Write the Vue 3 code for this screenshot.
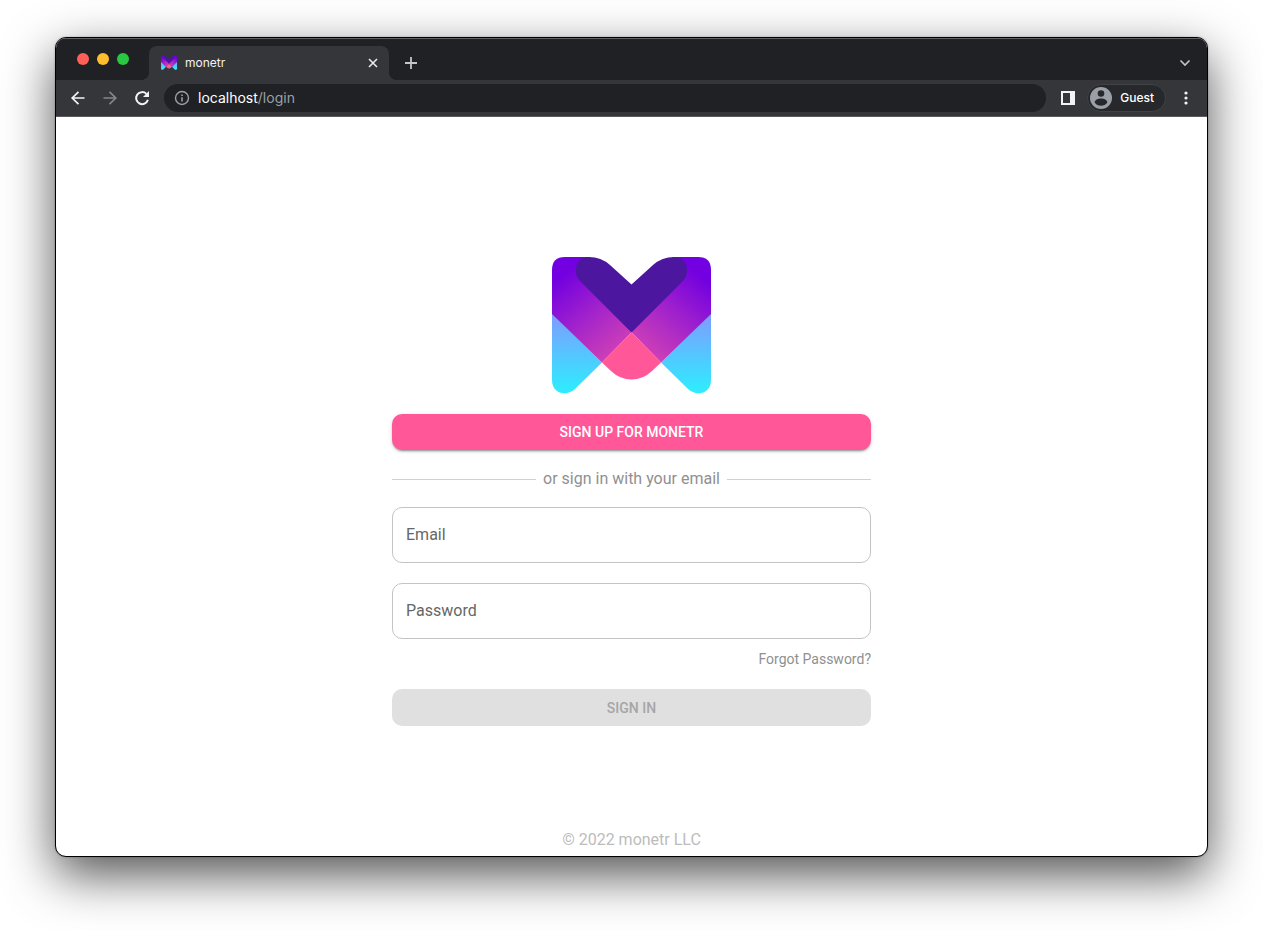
<script setup>
import { ref } from 'vue'

const email = ref('')
const password = ref('')
const address = ref('localhost/login')
</script>

<template>
  <div class="desktop">
    <svg class="defs" width="0" height="0" aria-hidden="true">
      <defs>
        <linearGradient id="purple-left" gradientUnits="userSpaceOnUse" x1="10" y1="18" x2="74" y2="96">
          <stop offset="0" stop-color="#7200e0" />
          <stop offset="0.5" stop-color="#a424ca" />
          <stop offset="1" stop-color="#d444b2" />
        </linearGradient>
        <linearGradient id="purple-right" gradientUnits="userSpaceOnUse" x1="149" y1="18" x2="85" y2="96">
          <stop offset="0" stop-color="#7200e0" />
          <stop offset="0.5" stop-color="#a424ca" />
          <stop offset="1" stop-color="#d444b2" />
        </linearGradient>
        <linearGradient id="cyan" gradientUnits="userSpaceOnUse" x1="0" y1="58" x2="0" y2="136">
          <stop offset="0" stop-color="#7f9cff" />
          <stop offset="1" stop-color="#2ceeff" />
        </linearGradient>
        <symbol id="monetr" viewBox="0 0 159 137">
          <path fill="url(#cyan)" d="M0 56 50 105.500 23 132C16 139 0 138 0 123ZM159 56 109 105.500 136 132C143 139 159 138 159 123Z" />
          <path fill="url(#purple-left)" d="M0 57V13Q0 0 13 0H38L79.500 75.500 50 105.500Z" />
          <path fill="url(#purple-right)" d="M159 57V13Q159 0 146 0H121L79.500 75.500 109 105.500Z" />
          <path fill="#ff5798" d="M79.500 75.500 109 105.500 100 114Q91 122.500 79.500 122.500 68 122.500 59 114L50 105.500Z" />
          <path fill="#4d169f" d="M79.500 75.500 28 24C20 15 24 0 37 0Q49 0 58 8L79.500 27.500 101 8Q110 0 122 0C135 0 139 15 131 24Z" />
        </symbol>
      </defs>
    </svg>

    <div class="window">
      <header class="tabstrip">
        <div class="lights">
          <button class="light red" aria-label="Close window"></button>
          <button class="light yellow" aria-label="Minimize window"></button>
          <button class="light green" aria-label="Zoom window"></button>
        </div>
        <div class="tab">
          <svg class="favicon" viewBox="0 0 159 137" aria-hidden="true"><use href="#monetr" /></svg>
          <span class="tab-title">monetr</span>
          <button class="icon" aria-label="Close tab">
            <svg width="16" height="16" viewBox="0 0 16 16" fill="none" stroke="#e8eaed" stroke-width="1.600"><path d="m4 4 8 8m0-8-8 8" /></svg>
          </button>
        </div>
        <button class="icon new-tab" aria-label="New tab">
          <svg width="16" height="16" viewBox="0 0 16 16" fill="none" stroke="#c4c7ca" stroke-width="1.800"><path d="M8 2v12M2 8h12" /></svg>
        </button>
        <button class="icon tab-search" aria-label="Search tabs">
          <svg width="16" height="16" viewBox="0 0 16 16" fill="none" stroke="#c4c7ca" stroke-width="1.600"><path d="m3.500 5.500 4.500 4.500 4.500-4.500" /></svg>
        </button>
      </header>

      <nav class="toolbar" aria-label="Browser">
        <button class="icon" aria-label="Back">
          <svg width="16" height="16" viewBox="0 0 16 16" fill="none" stroke="#f1f3f4" stroke-width="1.700"><path d="M14.500 8H2.500M8.500 1.800 2.200 8l6.300 6.200" /></svg>
        </button>
        <button class="icon" aria-label="Forward">
          <svg width="16" height="16" viewBox="0 0 16 16" fill="none" stroke="#85868a" stroke-width="1.700"><path d="M1.500 8h12M7.500 1.800 13.800 8l-6.300 6.200" /></svg>
        </button>
        <button class="icon" aria-label="Reload">
          <svg width="16" height="16" viewBox="0 0 16 16"><path fill="none" stroke="#f1f3f4" stroke-width="2" d="M13.900 9.800A6 6 0 1 1 12.400 3.900" /><path fill="#f1f3f4" d="M15 1v6H9Z" /></svg>
        </button>
        <label class="omnibox">
          <svg width="16" height="16" viewBox="0 0 16 16" fill="none" stroke="#9aa0a6" aria-hidden="true"><circle cx="8" cy="8" r="6.500" stroke-width="1.400" /><path d="M8 7.200v4.300M8 4.400v1.600" stroke-width="1.600" /></svg>
          <span class="address"><span class="host">localhost</span>/login</span>
          <input v-model="address" class="address-input" aria-label="Address" />
        </label>
        <button class="icon panel" aria-label="Side panel">
          <svg width="14" height="14" viewBox="0 0 14 14"><path fill="#f1f3f4" fill-rule="evenodd" d="M0 0h14v14H0ZM2 2v10h7V2Z" /></svg>
        </button>
        <button class="profile">
          <svg width="22" height="22" viewBox="0 0 22 22" aria-hidden="true"><circle cx="11" cy="11" r="11" fill="#9aa0a6" /><circle cx="11" cy="6.500" r="3.300" fill="#27282c" /><path fill="#27282c" d="M4.700 15.500c0-2.500 3.200-4 6.300-4s6.300 1.500 6.300 4c-1.400 2.200-3.800 3.300-6.300 3.300s-4.900-1.100-6.300-3.300Z" /></svg>
          <span>Guest</span>
        </button>
        <button class="icon" aria-label="Menu">
          <svg width="16" height="16" viewBox="0 0 16 16" fill="#f1f3f4"><circle cx="8" cy="3" r="1.600" /><circle cx="8" cy="8" r="1.600" /><circle cx="8" cy="13" r="1.600" /></svg>
        </button>
      </nav>

      <main class="page">
        <form class="login" @submit.prevent>
          <svg class="logo" viewBox="0 0 159 137" role="img" aria-label="monetr logo"><use href="#monetr" /></svg>
          <button type="button" class="button primary">SIGN UP FOR MONETR</button>
          <div class="divider"><span>or sign in with your email</span></div>
          <div class="field">
            <input id="email" v-model="email" type="email" />
            <label v-if="!email" for="email">Email</label>
          </div>
          <div class="field">
            <input id="password" v-model="password" type="password" />
            <label v-if="!password" for="password">Password</label>
          </div>
          <a class="forgot" href="#">Forgot Password?</a>
          <button type="submit" class="button" disabled>SIGN IN</button>
        </form>
        <footer class="copyright">© 2022 monetr LLC</footer>
      </main>
    </div>
  </div>
</template>

<style>
body {
  margin: 0;
  background: #fff;
}
</style>

<style scoped>
* {
  box-sizing: border-box;
}
button {
  border: 0;
  padding: 0;
  background: none;
  font: inherit;
  color: inherit;
}
.desktop {
  display: flex;
  min-height: 100vh;
  padding: 37px 55px 73px;
  overflow: hidden;
  font-family: Roboto, sans-serif;
}
.defs {
  position: absolute;
}
.window {
  flex: 1;
  min-width: 0;
  display: flex;
  flex-direction: column;
  border: 1px solid #000;
  border-radius: 11px;
  overflow: hidden;
  background: #fff;
  box-shadow: 0 18px 50px rgba(0, 0, 0, 0.68), 0 0 2px rgba(0, 0, 0, 0.3);
}
.tabstrip {
  display: flex;
  align-items: flex-end;
  height: 42px;
  background: #202124;
  box-shadow: inset 0 1px #606164;
  color: #f1f3f4;
  font: 12px/16px Inter, sans-serif;
}
.lights {
  display: flex;
  gap: 8px;
  padding: 0 20px 15px 21px;
}
.light {
  width: 12px;
  height: 12px;
  border-radius: 50%;
}
.red {
  background: #ff5f57;
}
.yellow {
  background: #febc2e;
}
.green {
  background: #28c840;
}
.tab {
  position: relative;
  display: flex;
  align-items: center;
  gap: 8px;
  width: 240px;
  height: 34px;
  padding: 0 8px 0 12px;
  border-radius: 8px 8px 0 0;
  background: #35363a;
}
.tab::before,
.tab::after {
  content: '';
  position: absolute;
  bottom: 0;
  width: 8px;
  height: 8px;
}
.tab::before {
  right: 100%;
  background: radial-gradient(circle at 0 0, #202124 8px, #35363a 8px);
}
.tab::after {
  left: 100%;
  background: radial-gradient(circle at 100% 0, #202124 8px, #35363a 8px);
}
.favicon {
  width: 16px;
  height: 14px;
}
.tab-title {
  flex: 1;
}
.icon {
  display: flex;
  flex: none;
}
.new-tab {
  margin: 0 0 9px 14px;
}
.tab-search {
  margin: 0 14px 9px auto;
}
.toolbar {
  display: flex;
  align-items: center;
  gap: 16px;
  height: 37px;
  padding: 0 13px 0 14px;
  border-bottom: 1px solid #5a5b5f;
  background: #35363a;
  color: #fff;
  font: 14px/20px Inter, sans-serif;
}
.omnibox {
  position: relative;
  flex: 1;
  display: flex;
  align-items: center;
  gap: 8px;
  min-width: 0;
  height: 28px;
  padding: 0 10px;
  margin-left: -2px;
  border-radius: 14px;
  background: #202124;
}
.address {
  color: #9aa0a6;
}
.host {
  color: #fff;
}
.address-input {
  position: absolute;
  inset: 0;
  width: 100%;
  border: 0;
  border-radius: 14px;
  opacity: 0;
}
.panel {
  margin: 0 -4px 0 -1px;
}
.profile {
  display: flex;
  align-items: center;
  gap: 8px;
  height: 28px;
  padding: 0 11px 0 2px;
  margin-right: -4px;
  border: 1px solid #414246;
  border-radius: 14px;
  background: #27282c;
  font-size: 12px;
  font-weight: 500;
}
.page {
  flex: 1;
  display: flex;
  flex-direction: column;
  align-items: center;
  padding: 140px 16px 4px;
}
.login {
  display: flex;
  flex-direction: column;
  width: 100%;
  max-width: 479px;
}
.logo {
  align-self: center;
  width: 159px;
  height: 137px;
  margin-bottom: 20px;
}
.button {
  height: 37px;
  border-radius: 10px;
  background: #e0e0e0;
  color: #a6a6a6;
  font-size: 14px;
  font-weight: 500;
}
.primary {
  height: 36px;
  background: #ff5798;
  color: #fff;
  box-shadow: 0 3px 1px -2px rgba(0, 0, 0, 0.2), 0 2px 2px rgba(0, 0, 0, 0.14), 0 1px 5px rgba(0, 0, 0, 0.12);
}
.divider {
  display: flex;
  align-items: center;
  gap: 7px;
  margin: 17px 0 16px;
  color: #909090;
  font-size: 16px;
  line-height: 24px;
}
.divider::before,
.divider::after {
  content: '';
  flex: 1;
  height: 1px;
  background: #cfcfdc;
}
.field {
  position: relative;
  margin-bottom: 20px;
}
.field input {
  display: block;
  width: 100%;
  height: 56px;
  padding: 0 13px;
  border: 1px solid #c4c4c4;
  border-radius: 10px;
  background: #fff;
  font: 16px Roboto, sans-serif;
}
.field label {
  position: absolute;
  top: 16px;
  left: 14px;
  color: #666;
  font-size: 16px;
  line-height: 24px;
  pointer-events: none;
}
.forgot {
  align-self: flex-end;
  margin: -10px 0 20px;
  color: #909090;
  font-size: 14px;
  line-height: 20px;
  text-decoration: none;
}
.copyright {
  margin-top: auto;
  color: #bcbcbc;
  font-size: 16px;
  line-height: 24px;
}
</style>
